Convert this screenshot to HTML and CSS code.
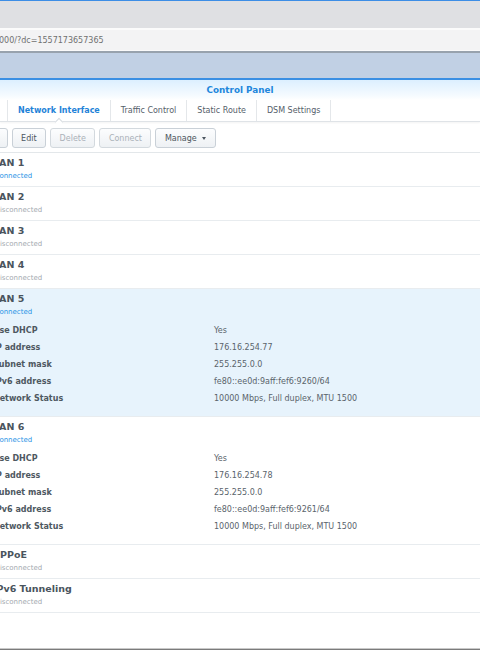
FILE: index.html
```html
<!DOCTYPE html>
<html lang="en">
<head>
    <meta charset="UTF-8">
    <meta name="viewport" content="width=device-width, initial-scale=1.0">
    <title>Control Panel - Network Interface</title>
    <link rel="stylesheet" href="styles.css">
</head>
<body>

    <div class="browser-strip"></div>
    <div class="address-bar">
        <span class="address-text">000/?dc=1557173657365</span>
    </div>
    <div class="desktop"></div>

    <div class="window">
        <div class="window-title">Control Panel</div>

        <div class="tabs">
            <div class="tab active">Network Interface</div>
            <div class="tab">Traffic Control</div>
            <div class="tab">Static Route</div>
            <div class="tab">DSM Settings</div>
        </div>

        <div class="toolbar">
            <button class="btn">Create</button>
            <button class="btn">Edit</button>
            <button class="btn" disabled>Delete</button>
            <button class="btn" disabled>Connect</button>
            <button class="btn">Manage <span class="caret"></span></button>
        </div>

        <div class="iface-list">
            <div class="iface">
                <div class="iface-name">LAN 1</div>
                <div class="iface-status connected">Connected</div>
            </div>
            <div class="iface">
                <div class="iface-name">LAN 2</div>
                <div class="iface-status">Disconnected</div>
            </div>
            <div class="iface">
                <div class="iface-name">LAN 3</div>
                <div class="iface-status">Disconnected</div>
            </div>
            <div class="iface">
                <div class="iface-name">LAN 4</div>
                <div class="iface-status">Disconnected</div>
            </div>
            <div class="iface selected">
                <div class="iface-name">LAN 5</div>
                <div class="iface-status connected">Connected</div>
                <div class="iface-details">
                    <div class="label">Use DHCP</div><div class="value">Yes</div>
                    <div class="label">IP address</div><div class="value">176.16.254.77</div>
                    <div class="label">Subnet mask</div><div class="value">255.255.0.0</div>
                    <div class="label">IPv6 address</div><div class="value">fe80::ee0d:9aff:fef6:9260/64</div>
                    <div class="label">Network Status</div><div class="value">10000 Mbps, Full duplex, MTU 1500</div>
                </div>
            </div>
            <div class="iface">
                <div class="iface-name">LAN 6</div>
                <div class="iface-status connected">Connected</div>
                <div class="iface-details">
                    <div class="label">Use DHCP</div><div class="value">Yes</div>
                    <div class="label">IP address</div><div class="value">176.16.254.78</div>
                    <div class="label">Subnet mask</div><div class="value">255.255.0.0</div>
                    <div class="label">IPv6 address</div><div class="value">fe80::ee0d:9aff:fef6:9261/64</div>
                    <div class="label">Network Status</div><div class="value">10000 Mbps, Full duplex, MTU 1500</div>
                </div>
            </div>
            <div class="iface">
                <div class="iface-name">PPPoE</div>
                <div class="iface-status">Disconnected</div>
            </div>
            <div class="iface">
                <div class="iface-name">IPv6 Tunneling</div>
                <div class="iface-status">Disconnected</div>
            </div>
        </div>
    </div>

    <div class="bottom-edge"></div>

</body>
</html>
```

FILE: styles.css
```css
body {
    margin: 0;
    height: 100vh;
    display: flex;
    flex-direction: column;
    overflow: hidden;
    background-color: #fff;
    font-family: "DejaVu Sans", Verdana, sans-serif;
    font-size: 8px;
    color: #4e5861;
}

.browser-strip {
    height: 27px;
    border-top: 1px solid #3d8ee6;
    border-bottom: 2px solid #fbfbfb;
    background-color: #dfe0e3;
}

.address-bar {
    height: 20px;
    line-height: 21px;
    background-color: #f3f3f4;
    border-bottom: 1px solid #fafafa;
    color: #707070;
    white-space: nowrap;
}

.address-text {
    margin-left: -1px;
}

.desktop {
    height: 25px;
    border-top: 2px solid #98a2ad;
    border-bottom: 2px solid #3b8fe3;
    background-color: #c1d0e4;
}

.window {
    flex: 1;
    display: flex;
    flex-direction: column;
}

.window-title {
    height: 20px;
    line-height: 21px;
    text-align: center;
    font-size: 8.8px;
    font-weight: bold;
    color: #2186dc;
    background: linear-gradient(#dcefff, #f6fbff 80%, #fff);
}

.tabs {
    display: flex;
    height: 21px;
    padding-left: 7px;
    border-bottom: 1px solid #dfe3e7;
    box-shadow: 0 1px 2px rgba(0, 0, 0, 0.05);
}

.tab {
    position: relative;
    padding: 0 10px;
    line-height: 21px;
    border-right: 1px solid #e4e7ea;
    color: #55606a;
    white-space: nowrap;
}

.tab:first-child {
    border-left: 1px solid #e4e7ea;
}

.tab.active {
    color: #1f83d8;
    font-weight: bold;
}

.tab.active::after {
    content: "";
    position: absolute;
    left: 50%;
    bottom: -4px;
    width: 5px;
    height: 5px;
    margin-left: -3px;
    background-color: #fff;
    border-left: 1px solid #d7dce1;
    border-top: 1px solid #d7dce1;
    transform: rotate(45deg);
}

.toolbar {
    display: flex;
    gap: 4px;
    padding: 6px 0 4px;
    margin-left: -38px;
    border-bottom: 1px solid #e3e7ea;
}

.btn {
    height: 20px;
    padding: 0 8.5px;
    font-family: inherit;
    font-size: 8px;
    color: #4c5660;
    background: linear-gradient(#fcfdfe, #eef1f4);
    border: 1px solid #c9d0d7;
    border-radius: 3px;
    white-space: nowrap;
}

.btn:disabled {
    color: #aab1b8;
    border-color: #d3d9de;
}

.caret {
    display: inline-block;
    width: 0;
    height: 0;
    margin-left: 3px;
    vertical-align: 1px;
    border-left: 2.5px solid transparent;
    border-right: 2.5px solid transparent;
    border-top: 3px solid #4c5660;
}

.iface-list {
    margin-left: -7px;
}

.iface {
    padding: 3px 0 3px;
    border-bottom: 1px solid #e8ecef;
}

.iface.selected {
    background-color: #e7f3fc;
}

.iface-name {
    line-height: 13px;
    font-size: 9.5px;
    font-weight: bold;
    color: #4a545d;
}

.iface-status {
    margin-left: 1.5px;
    line-height: 14px;
    font-size: 7px;
    color: #a4aab0;
}

.iface-status.connected {
    color: #2a93e6;
}

.iface-details {
    display: grid;
    grid-template-columns: 221px 1fr;
    grid-auto-rows: 17px;
    align-items: center;
    margin-top: 3px;
    padding-bottom: 6px;
}

.label {
    font-weight: bold;
    color: #4e5861;
}

.value {
    color: #5a636b;
}

.bottom-edge {
    margin-top: auto;
    height: 1px;
    border-top: 1px solid #c9c9c9;
    background-color: #7b7b7b;
}
```
